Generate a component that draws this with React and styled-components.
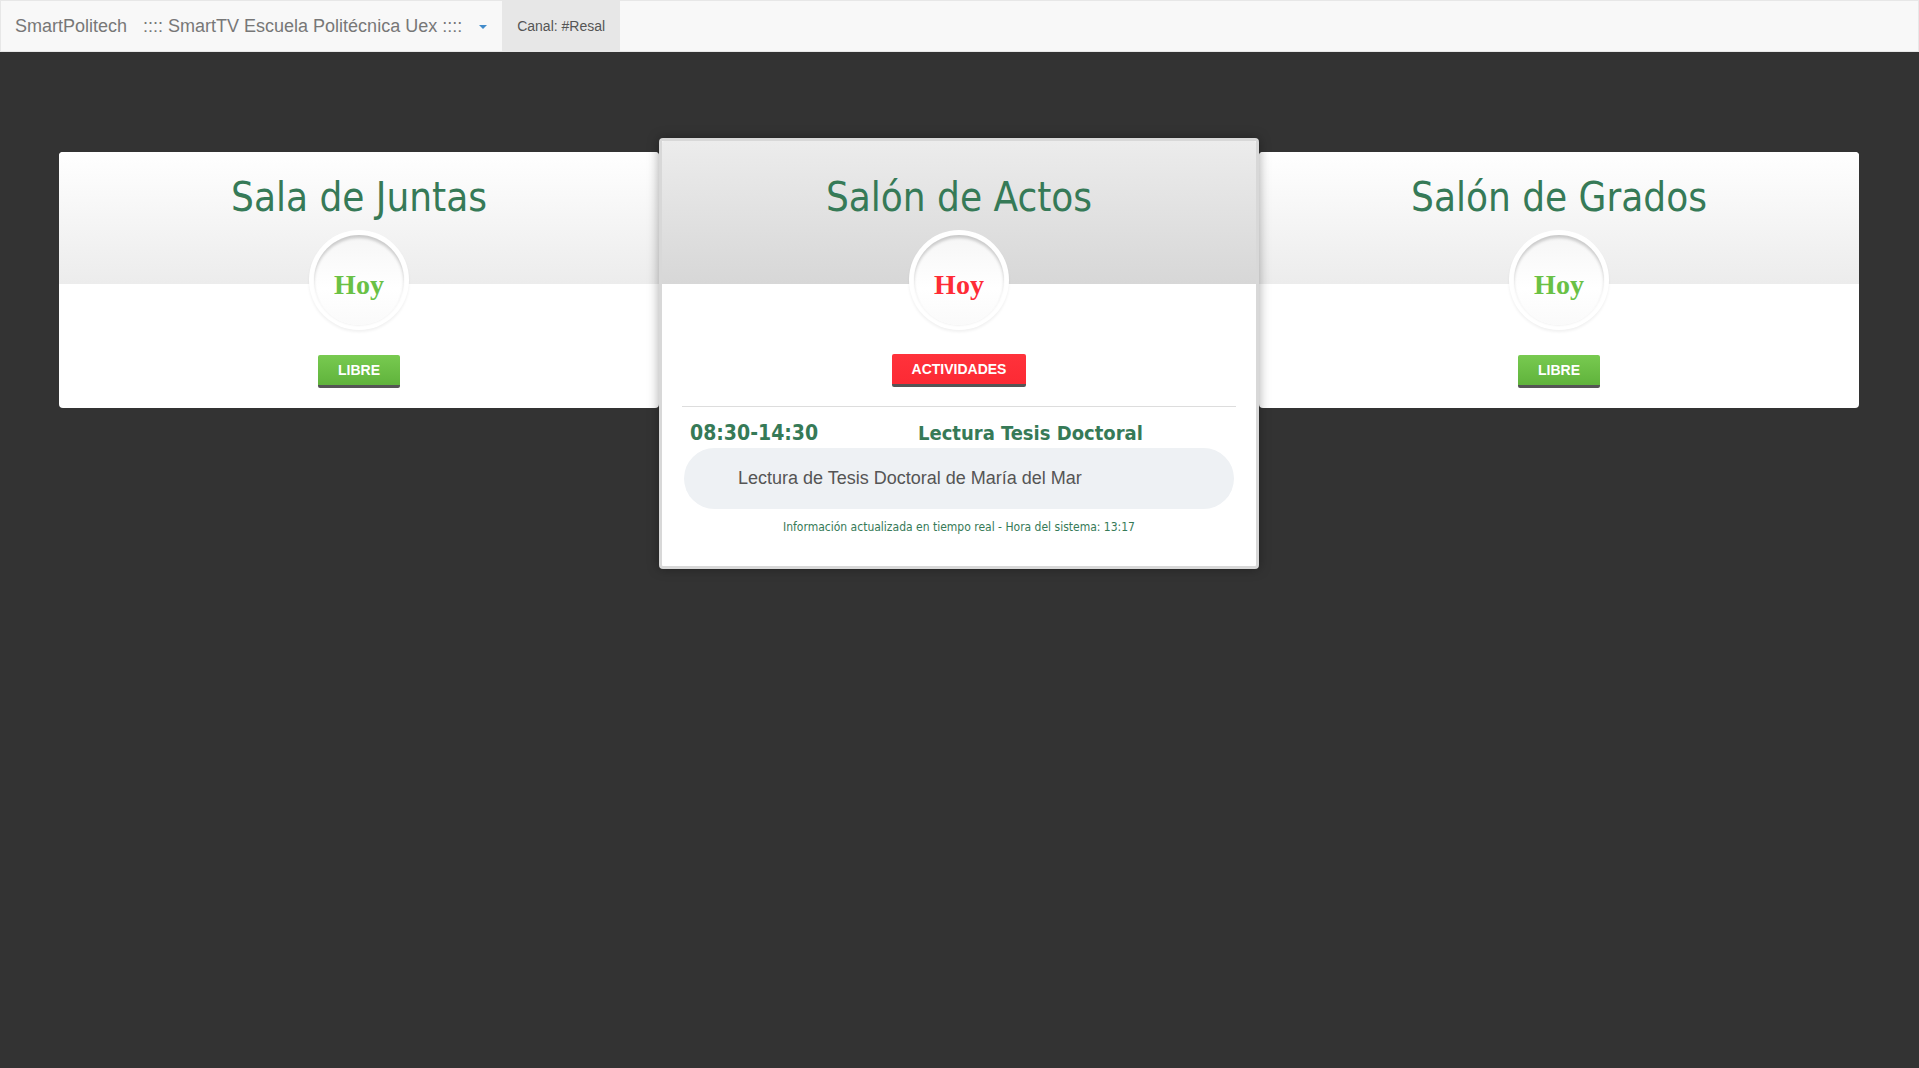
import React from "react";
import styled, { createGlobalStyle, css } from "styled-components";

const Global = createGlobalStyle`
  html, body { margin: 0; padding: 0; background: #333333; }
  body { min-height: 100vh; font-family: "Liberation Sans", Arial, sans-serif; }
  * { box-sizing: border-box; }
`;

const Navbar = styled.nav`
  display: flex;
  align-items: stretch;
  height: 52px;
  background: #f8f8f8;
  border: 1px solid #e7e7e7;
  font-family: "Liberation Sans", Arial, sans-serif;
`;

const Brand = styled.div`
  padding: 0 15px 0 14px;
  font-size: 18px;
  line-height: 50px;
  color: #777777;
`;

const NavTitle = styled.div`
  display: flex;
  align-items: center;
  margin-left: 1px;
  padding-right: 15px;
  font-size: 18px;
  color: #777777;
  white-space: pre;
`;

const Caret = styled.span`
  display: inline-block;
  margin-left: 17px;
  margin-top: 2px;
  width: 0;
  height: 0;
  border-left: 4px solid transparent;
  border-right: 4px solid transparent;
  border-top: 4px solid #428bca;
`;

const NavTab = styled.div`
  padding: 0 15px;
  background: #e7e7e7;
  color: #555555;
  font-size: 14px;
  line-height: 50px;
`;

const Main = styled.main`
  padding: 86px 60px 0 59px;
`;

const Cards = styled.div`
  display: flex;
  justify-content: center;
  align-items: flex-start;
`;

const Card = styled.section`
  flex: none;
  width: 600px;
  background: #ffffff;
  border-radius: 4px;
  ${(p) =>
    p.$featured
      ? css`
          position: relative;
          z-index: 1;
          border: 3px solid #d8d8d8;
          box-shadow: 0 0 12px rgba(0, 0, 0, 0.35);
        `
      : css`
          margin-top: 14px;
        `}
`;

const Header = styled.header`
  height: ${(p) => (p.$featured ? 143 : 132)}px;
  padding-top: ${(p) => (p.$featured ? 34 : 23)}px;
  border-radius: ${(p) => (p.$featured ? "2px 2px 0 0" : "4px 4px 0 0")};
  background: ${(p) =>
    p.$featured
      ? "linear-gradient(to bottom, #ececec 0%, #d7d7d7 100%)"
      : "linear-gradient(to bottom, #ffffff 0%, #ececec 100%)"};
  text-align: center;
`;

const Title = styled.h2`
  margin: 0;
  font-family: "DejaVu Sans Condensed", "DejaVu Sans", sans-serif;
  font-stretch: condensed;
  font-weight: 400;
  font-size: 40px;
  line-height: 45px;
  color: #367a57;
`;

const Ring = styled.div`
  width: 100px;
  height: 100px;
  margin: 10px auto 0;
  padding: 5px;
  border-radius: 50%;
  background: #ffffff;
  box-shadow: 0 2px 3px rgba(0, 0, 0, 0.06);
`;

const Badge = styled.div`
  display: flex;
  align-items: center;
  justify-content: center;
  width: 90px;
  height: 90px;
  padding-top: 9px;
  border-radius: 50%;
  background: linear-gradient(to bottom, #f6f6f6 0%, #ffffff 60%, #fafafa 100%);
  box-shadow: inset 0 3px 3px rgba(0, 0, 0, 0.18), 0 1px 2px rgba(0, 0, 0, 0.05);
  font-family: "Liberation Serif", "Times New Roman", serif;
  font-weight: 700;
  font-size: 28px;
  line-height: 28px;
  color: ${(p) => (p.$busy ? "#fe2c36" : "#6ac145")};
`;

const Body = styled.div`
  text-align: center;
  padding: ${(p) => (p.$featured ? "70px 20px 31px" : "71px 0 20px")};
`;

const StatusButton = styled.span`
  display: inline-block;
  height: 33px;
  padding: 0 20px;
  border-bottom: 3px solid #555555;
  border-radius: 2px;
  font-family: "Liberation Sans", Arial, sans-serif;
  font-weight: 700;
  font-size: 14px;
  line-height: 30px;
  color: #ffffff;
  background: ${(p) =>
    p.$busy
      ? "linear-gradient(to bottom, #ff323b 0%, #fc2a34 100%)"
      : "linear-gradient(to bottom, #78ca50 0%, #60b33c 100%)"};
`;

const Divider = styled.hr`
  margin: 19px 0 0;
  border: 0;
  border-top: 1px solid #dddddd;
`;

const EventRow = styled.div`
  display: grid;
  grid-template-columns: 228px 1fr;
  margin-top: 13px;
  padding-left: 8px;
  text-align: left;
  font-family: "DejaVu Sans Condensed", "DejaVu Sans", sans-serif;
  font-stretch: condensed;
  font-weight: 700;
  font-size: 20px;
  line-height: 26px;
  color: #367a57;
`;

const Time = styled.span`
  font-size: 21px;
`;

const Description = styled.div`
  margin: 2px 2px 0;
  height: 61px;
  padding-left: 54px;
  display: flex;
  align-items: center;
  border-radius: 31px;
  background: #eef1f4;
  font-family: "Liberation Sans", Arial, sans-serif;
  font-size: 18px;
  color: #555555;
  text-align: left;
`;

const Footer = styled.p`
  margin: 11px 0 0;
  font-family: "DejaVu Sans Condensed", "DejaVu Sans", sans-serif;
  font-stretch: condensed;
  font-size: 12px;
  line-height: 15px;
  color: #367a57;
`;

const rooms = [
  { name: "Sala de Juntas", busy: false },
  {
    name: "Salón de Actos",
    busy: true,
    featured: true,
    events: [
      {
        time: "08:30-14:30",
        title: "Lectura Tesis Doctoral",
        description: "Lectura de Tesis Doctoral de María del Mar",
      },
    ],
  },
  { name: "Salón de Grados", busy: false },
];

function RoomCard({ room }) {
  const featured = !!room.featured;
  return (
    <Card $featured={featured}>
      <Header $featured={featured}>
        <Title>{room.name}</Title>
        <Ring>
          <Badge $busy={room.busy}>Hoy</Badge>
        </Ring>
      </Header>
      <Body $featured={featured}>
        <StatusButton $busy={room.busy}>{room.busy ? "ACTIVIDADES" : "LIBRE"}</StatusButton>
        {featured && (
          <>
            <Divider />
            {room.events.map((ev) => (
              <React.Fragment key={ev.time}>
                <EventRow>
                  <Time>{ev.time}</Time>
                  <span>{ev.title}</span>
                </EventRow>
                <Description>{ev.description}</Description>
              </React.Fragment>
            ))}
            <Footer>Información actualizada en tiempo real - Hora del sistema: 13:17</Footer>
          </>
        )}
      </Body>
    </Card>
  );
}

export default function App() {
  return (
    <>
      <Global />
      <Navbar>
        <Brand>SmartPolitech</Brand>
        <NavTitle>
          :::: SmartTV Escuela Politécnica Uex ::::
          <Caret />
        </NavTitle>
        <NavTab>Canal: #Resal</NavTab>
      </Navbar>
      <Main>
        <Cards>
          {rooms.map((r) => (
            <RoomCard key={r.name} room={r} />
          ))}
        </Cards>
      </Main>
    </>
  );
}
